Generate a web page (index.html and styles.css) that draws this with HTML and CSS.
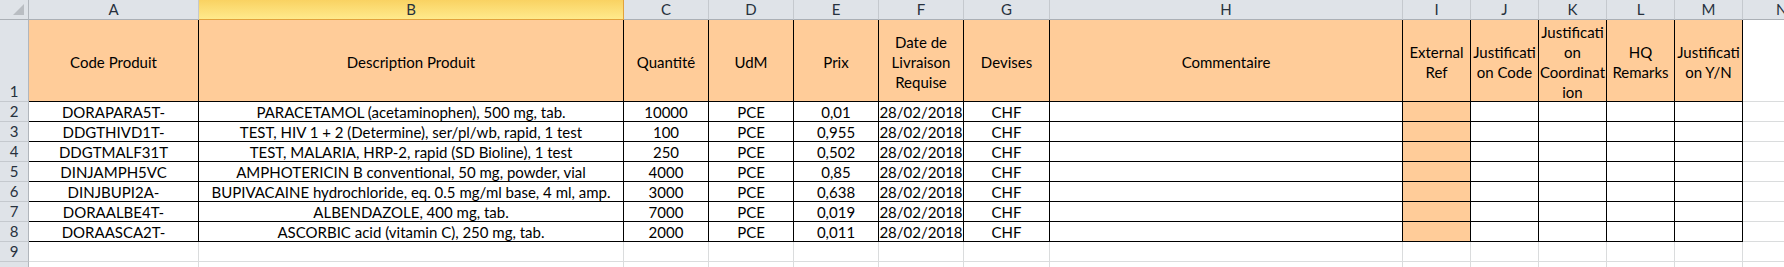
FILE: index.html
```html
<!DOCTYPE html>
<html>
<head>
<meta charset="utf-8">
<link rel="stylesheet" href="styles.css">
</head>
<body>
<div class="sheet">
  <div class="ch corner"><div class="tri"></div></div>
  <div class="ch">A</div>
  <div class="ch sel">B</div>
  <div class="ch">C</div>
  <div class="ch">D</div>
  <div class="ch">E</div>
  <div class="ch">F</div>
  <div class="ch">G</div>
  <div class="ch">H</div>
  <div class="ch">I</div>
  <div class="ch">J</div>
  <div class="ch">K</div>
  <div class="ch">L</div>
  <div class="ch">M</div>
  <div class="ch last">N</div>

  <div class="rh rh1">1</div>
  <div class="hd">Code Produit</div>
  <div class="hd">Description Produit</div>
  <div class="hd">Quantité</div>
  <div class="hd">UdM</div>
  <div class="hd">Prix</div>
  <div class="hd">Date de<br>Livraison<br>Requise</div>
  <div class="hd">Devises</div>
  <div class="hd">Commentaire</div>
  <div class="hd">External<br>Ref</div>
  <div class="hd">Justificati<br>on Code</div>
  <div class="hd">Justificati<br>on<br>Coordinat<br>ion</div>
  <div class="hd">HQ<br>Remarks</div>
  <div class="hd">Justificati<br>on Y/N</div>
  <div class="c"></div>

  <div class="rh">2</div>
  <div class="d">DORAPARA5T-</div>
  <div class="d">PARACETAMOL (acetaminophen), 500 mg, tab.</div>
  <div class="d">10000</div>
  <div class="d">PCE</div>
  <div class="d">0,01</div>
  <div class="d">28/02/2018</div>
  <div class="d">CHF</div>
  <div class="d"></div>
  <div class="d ext"></div>
  <div class="d"></div>
  <div class="d"></div>
  <div class="d"></div>
  <div class="d"></div>
  <div class="c"></div>

  <div class="rh">3</div>
  <div class="d">DDGTHIVD1T-</div>
  <div class="d">TEST, HIV 1 + 2 (Determine), ser/pl/wb, rapid, 1 test</div>
  <div class="d">100</div>
  <div class="d">PCE</div>
  <div class="d">0,955</div>
  <div class="d">28/02/2018</div>
  <div class="d">CHF</div>
  <div class="d"></div>
  <div class="d ext"></div>
  <div class="d"></div>
  <div class="d"></div>
  <div class="d"></div>
  <div class="d"></div>
  <div class="c"></div>

  <div class="rh">4</div>
  <div class="d">DDGTMALF31T</div>
  <div class="d">TEST, MALARIA, HRP-2, rapid (SD Bioline), 1 test</div>
  <div class="d">250</div>
  <div class="d">PCE</div>
  <div class="d">0,502</div>
  <div class="d">28/02/2018</div>
  <div class="d">CHF</div>
  <div class="d"></div>
  <div class="d ext"></div>
  <div class="d"></div>
  <div class="d"></div>
  <div class="d"></div>
  <div class="d"></div>
  <div class="c"></div>

  <div class="rh">5</div>
  <div class="d">DINJAMPH5VC</div>
  <div class="d">AMPHOTERICIN B conventional, 50 mg, powder, vial</div>
  <div class="d">4000</div>
  <div class="d">PCE</div>
  <div class="d">0,85</div>
  <div class="d">28/02/2018</div>
  <div class="d">CHF</div>
  <div class="d"></div>
  <div class="d ext"></div>
  <div class="d"></div>
  <div class="d"></div>
  <div class="d"></div>
  <div class="d"></div>
  <div class="c"></div>

  <div class="rh">6</div>
  <div class="d">DINJBUPI2A-</div>
  <div class="d">BUPIVACAINE hydrochloride, eq. 0.5 mg/ml base, 4 ml, amp.</div>
  <div class="d">3000</div>
  <div class="d">PCE</div>
  <div class="d">0,638</div>
  <div class="d">28/02/2018</div>
  <div class="d">CHF</div>
  <div class="d"></div>
  <div class="d ext"></div>
  <div class="d"></div>
  <div class="d"></div>
  <div class="d"></div>
  <div class="d"></div>
  <div class="c"></div>

  <div class="rh">7</div>
  <div class="d">DORAALBE4T-</div>
  <div class="d">ALBENDAZOLE, 400 mg, tab.</div>
  <div class="d">7000</div>
  <div class="d">PCE</div>
  <div class="d">0,019</div>
  <div class="d">28/02/2018</div>
  <div class="d">CHF</div>
  <div class="d"></div>
  <div class="d ext"></div>
  <div class="d"></div>
  <div class="d"></div>
  <div class="d"></div>
  <div class="d"></div>
  <div class="c"></div>

  <div class="rh">8</div>
  <div class="d">DORAASCA2T-</div>
  <div class="d">ASCORBIC acid (vitamin C), 250 mg, tab.</div>
  <div class="d">2000</div>
  <div class="d">PCE</div>
  <div class="d">0,011</div>
  <div class="d">28/02/2018</div>
  <div class="d">CHF</div>
  <div class="d"></div>
  <div class="d ext"></div>
  <div class="d"></div>
  <div class="d"></div>
  <div class="d"></div>
  <div class="d"></div>
  <div class="c"></div>

  <div class="rh">9</div>
  <div class="c"></div><div class="c"></div><div class="c"></div><div class="c"></div><div class="c"></div><div class="c"></div><div class="c"></div><div class="c"></div><div class="c"></div><div class="c"></div><div class="c"></div><div class="c"></div><div class="c"></div><div class="c"></div>

  <div class="rh rh10"></div>
  <div class="c"></div><div class="c"></div><div class="c"></div><div class="c"></div><div class="c"></div><div class="c"></div><div class="c"></div><div class="c"></div><div class="c"></div><div class="c"></div><div class="c"></div><div class="c"></div><div class="c"></div><div class="c"></div>
</div>
</body>
</html>
```
FILE: styles.css
```css
html, body {
  margin: 0;
  padding: 0;
  background: #ffffff;
  overflow: hidden;
}
.sheet {
  display: grid;
  grid-template-columns: 29px 170px 425px 85px 85px 85px 85px 86px 353px 68px 68px 68px 68px 68px 60px;
  grid-template-rows: 20px 82px repeat(8, 20px) 5px;
  width: 1844px;
  height: 267px;
  font-family: Lato, "Open Sans", sans-serif;
  font-size: 15px;
  color: #000;
}
.sheet > div {
  box-sizing: border-box;
  border-right: 1px solid #dadcdd;
  border-bottom: 1px solid #dadcdd;
  white-space: nowrap;
  overflow: hidden;
}
.ch {
  background: #dfe3e8;
  border-right-color: #c5c9ce !important;
  border-bottom-color: #abb0b6 !important;
  color: #27313d;
  display: flex;
  align-items: center;
  justify-content: center;
  line-height: 19px;
}
.ch.sel {
  background: linear-gradient(#f9d262, #ffea8c);
  border-right-color: #e2a23c !important;
  border-bottom-color: #e2a23c !important;
}
.ch.last {
  justify-content: flex-start;
  padding-left: 33px;
}
.corner {
  justify-content: flex-end;
  align-items: flex-end;
  padding: 0 4px 4px 0;
  border-right-color: #b1b6bc !important;
}
.tri {
  width: 11px;
  height: 11px;
  background: #b9bdc2;
  clip-path: polygon(100% 0, 100% 100%, 0 100%);
}
.rh {
  background: #dfe3e8;
  border-right-color: #b1b6bc !important;
  border-bottom-color: #c5c9ce !important;
  color: #27313d;
  display: flex;
  align-items: center;
  justify-content: center;
  line-height: 19px;
}
.rh1 {
  align-items: flex-end;
}
.rh10 {
  border-bottom: none !important;
}
.c:nth-last-child(-n+14) {
  border-bottom: none;
}
.hd {
  background: #ffcc99;
  border-right-color: #000 !important;
  border-bottom-color: #000 !important;
  display: flex;
  align-items: center;
  justify-content: center;
  text-align: center;
  line-height: 20px;
  padding-top: 2px;
}
.d {
  border-right-color: #000 !important;
  border-bottom-color: #000 !important;
  text-align: center;
  line-height: 20px;
}
.d.ext {
  background: #ffcc99;
}
```
